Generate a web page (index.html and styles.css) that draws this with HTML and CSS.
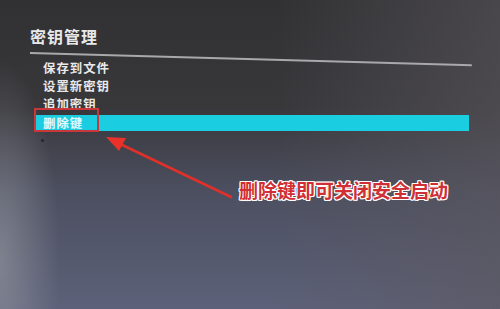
FILE: index.html
```html
<!DOCTYPE html>
<html lang="zh-CN">
<head>
  <meta charset="UTF-8">
  <meta name="viewport" content="width=device-width, initial-scale=1.0">
  <title>密钥管理</title>
  <link rel="stylesheet" href="styles.css">
</head>
<body>
  <div class="screen">
    <div class="panel">
      <h1 class="title">密钥管理</h1>
      <div class="rule"></div>
      <ul class="menu">
        <li>保存到文件</li>
        <li>设置新密钥</li>
        <li>追加密钥</li>
        <li class="cur">删除键</li>
      </ul>
      <div class="dot"></div>
    </div>

    <!-- 标注箭头 -->
    <svg class="arrow" width="500" height="309" viewBox="0 0 500 309">
      <line x1="231" y1="197" x2="118" y2="143" stroke="#e0302a" stroke-width="2.5" stroke-linecap="round"/>
      <polygon points="106,137 126,138 119,151" fill="#e8322a"/>
    </svg>
    <div class="note">删除键即可关闭安全启动</div>
  </div>
</body>
</html>
```

FILE: styles.css
```css
body{
	margin: 0;
}
.screen{
	position: relative;
	width: 500px;
	height: 309px;
	overflow: hidden;
	background:
		radial-gradient(ellipse 60px 200px at 0 260px, rgba(160,162,168,0.55) 0, rgba(140,142,150,0) 100%),
		linear-gradient(90deg, rgba(70,70,74,0) 55%, rgba(92,88,94,0.55) 100%),
		linear-gradient(180deg, #313133 0, #38383b 35%, #4c4f60 62%, #5d6179 100%);
	font-family: "Noto Sans CJK SC", "Noto Sans", sans-serif;
	color: #e9e9ea;
}
.panel{
	padding: 26px 0 0 30px;
}
.title{
	margin: 0;
	font-size: 16px;
	font-weight: bold;
	line-height: 20px;
	letter-spacing: 1px;
}
.rule{
	width: 442px;
	height: 2px;
	margin-top: 6px;
	background-color: #a9a9ab;
	transform-origin: left center;
	transform: rotate(1.6deg);
}
.menu{
	list-style: none;
	margin: 5px 0 0 5px;
	padding: 0;
	font-size: 12.4px;
	font-weight: bold;
	line-height: 18px;
	letter-spacing: 1px;
}
.menu li{
	padding-left: 8px;
	height: 18px;
}
.menu li.cur{
	position: relative;
	width: 426px;
	height: 16px;
	margin-top: 2px;
	line-height: 16px;
	background-color: #1bcde0;
	color: #e6fbff;
}
.menu li.cur::before{
	content: "";
	position: absolute;
	left: -1px;
	top: -7px;
	width: 65px;
	height: 24px;
	box-sizing: border-box;
	border: 2px solid #c8383a;
}
.dot{
	width: 3px;
	height: 3px;
	margin: 8px 0 0 11px;
	border-radius: 50%;
	background-color: #262628;
}
.arrow{
	position: absolute;
	left: 0;
	top: 0;
}
.note{
	position: absolute;
	left: 239px;
	top: 178px;
	font-size: 19px;
	font-weight: bold;
	line-height: 24px;
	color: #cf2f35;
	text-shadow: 1px 0 #fff, -1px 0 #fff, 0 1px #fff, 0 -1px #fff, 1px 1px #fff, -1px -1px #fff, 1px -1px #fff, -1px 1px #fff;
}
```
